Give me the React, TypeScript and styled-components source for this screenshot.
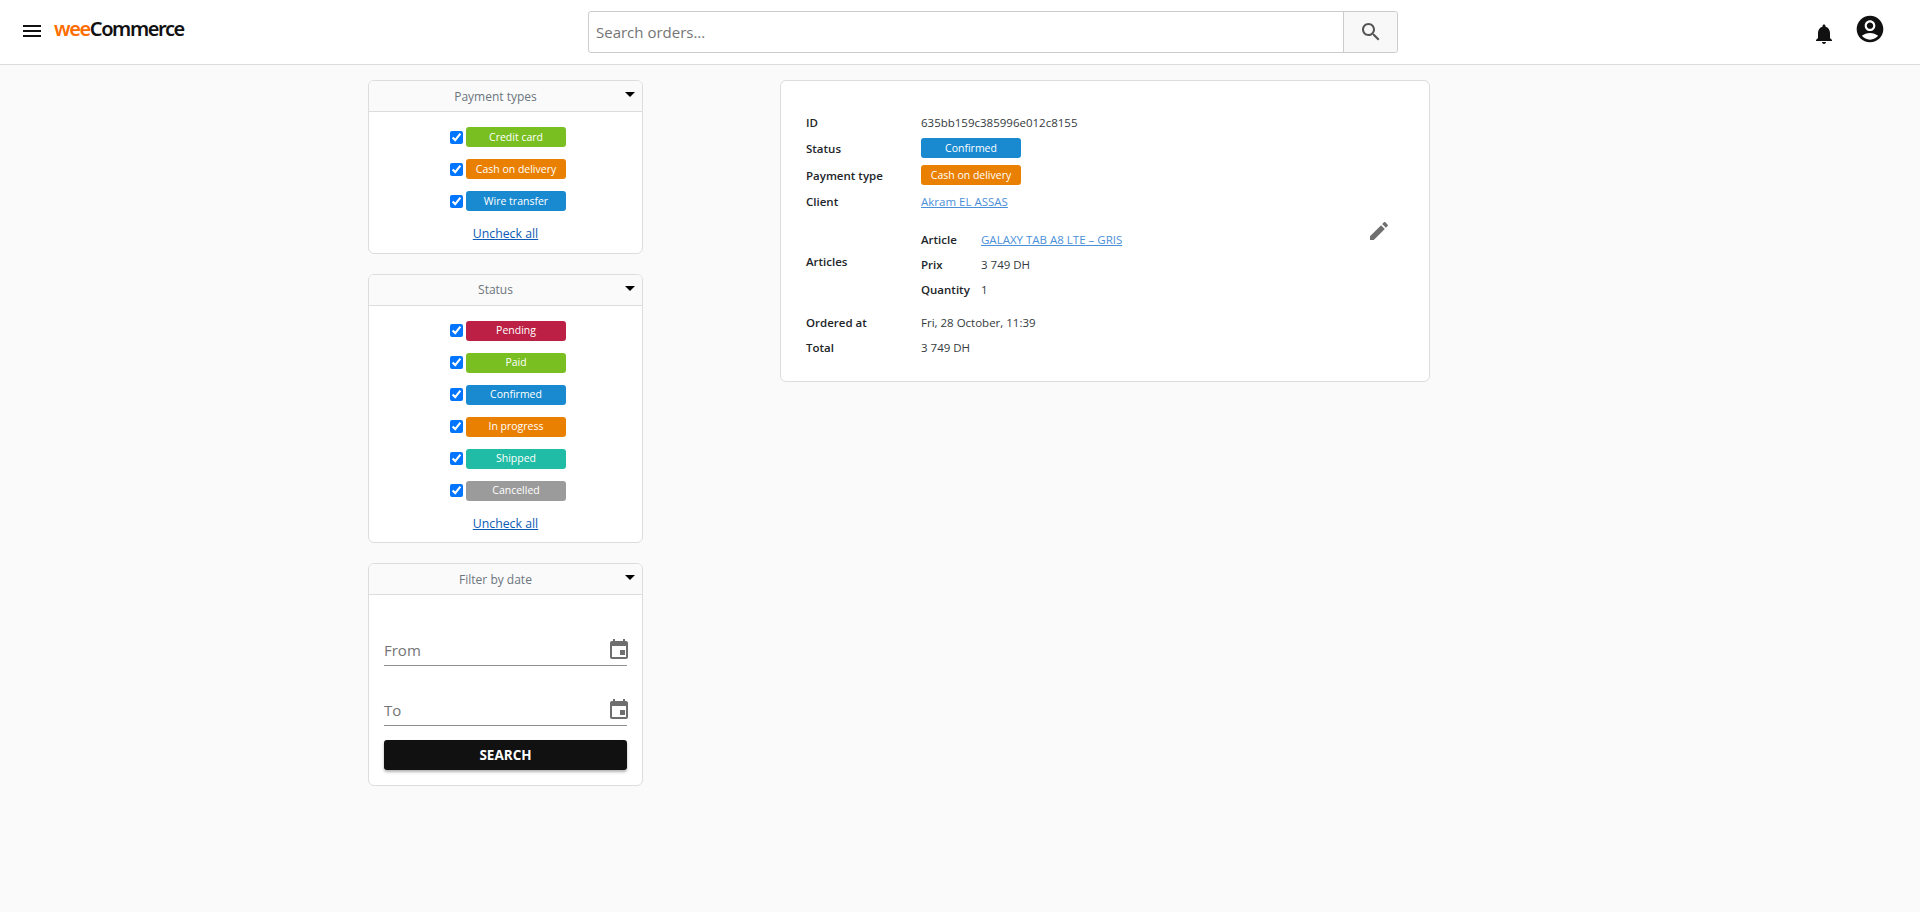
import React from "react";
import styled, { createGlobalStyle } from "styled-components";

const Global = createGlobalStyle`
  html, body { margin: 0; padding: 0; background: #fafafa; }
  body { font-family: "Open Sans", "Noto Sans", sans-serif; color: #212529; }
  * { box-sizing: border-box; }
`;

const Page = styled.div`
  min-height: 912px;
  background: #fafafa;
`;

const Header = styled.header`
  height: 65px;
  background: #fff;
  border-bottom: 1px solid #ddd;
  display: grid;
  grid-template-columns: 588px 810px 1fr;
  align-items: center;
`;

const Brand = styled.div`
  display: flex;
  align-items: center;
  padding-left: 20px;
  gap: 10px;
  margin-top: -3px;
`;

const Logo = styled.div`
  font-family: "Noto Sans", sans-serif;
  font-weight: 600;
  font-size: 20px;
  letter-spacing: -1.4px;
  color: #111;
  line-height: 24px;
  margin-top: -3px;
  span { color: #ff6d00; }
`;

const SearchBox = styled.div`
  display: flex;
  height: 42px;
  border: 1px solid #ccc;
  border-radius: 3px;
  margin-top: -1px;
`;

const SearchInput = styled.input`
  flex: 1;
  border: 0;
  outline: 0;
  padding: 0 7px;
  font: 400 15px "Open Sans", sans-serif;
  background: transparent;
  &::placeholder { color: #757575; opacity: 1; }
`;

const SearchButton = styled.button`
  width: 54px;
  border: 0;
  border-left: 1px solid #ccc;
  background: #f8f8f8;
  border-radius: 0 3px 3px 0;
  display: flex;
  align-items: center;
  justify-content: center;
  padding: 0;
`;

const HeaderIcons = styled.div`
  display: flex;
  align-items: center;
  justify-content: flex-end;
  padding-right: 34px;
  gap: 18px;
  margin-top: -6px;
`;

const BellIcon = styled.svg`
  margin-top: 9px;
`;

const Main = styled.main`
  display: flex;
  align-items: flex-start;
  gap: 137px;
  padding: 15px 0 0 368px;
`;

const FilterColumn = styled.aside`
  width: 275px;
  display: flex;
  flex-direction: column;
  gap: 20px;
`;

const Card = styled.section`
  background: #fff;
  border: 1px solid #ddd;
  border-radius: 6px;
  overflow: hidden;
`;

const CardHeader = styled.div`
  height: 31px;
  background: #fafafa;
  border-bottom: 1px solid #ddd;
  display: flex;
  align-items: center;
  position: relative;
`;

const CardTitle = styled.div`
  flex: 1;
  text-align: center;
  font-size: 12px;
  color: #6c757d;
  padding-right: 20px;
`;

const Caret = styled.span`
  position: absolute;
  right: 7px;
  top: 11px;
  width: 0;
  height: 0;
  border-left: 5px solid transparent;
  border-right: 5px solid transparent;
  border-top: 5px solid #000;
`;

const OptionList = styled.div`
  display: flex;
  flex-direction: column;
  align-items: center;
  gap: 12px;
  padding: 15px 0 0 5px;
`;

const OptionRow = styled.label`
  display: flex;
  align-items: center;
  gap: 3px;
  height: 20px;
`;

const Check = styled.input`
  width: 13px;
  height: 13px;
  margin: 0;
  accent-color: #0075ff;
`;

const Badge = styled.span<{ $color: string }>`
  display: flex;
  align-items: center;
  justify-content: center;
  width: 100px;
  height: 20px;
  border-radius: 3px;
  background: ${(p) => p.$color};
  color: #fff;
  font-size: 10.5px;
  padding-bottom: 1px;
`;

const UncheckLink = styled.a`
  display: block;
  text-align: center;
  font-size: 12.3px;
  color: #0d5bb5;
  text-decoration: underline;
  padding: 14px 0 9.5px;
  line-height: 18px;
`;

const DateBody = styled.div`
  padding: 0 15px 15px;
`;

const DateField = styled.div<{ $first?: boolean }>`
  height: ${(p) => (p.$first ? "71px" : "60px")};
  border-bottom: 1px solid #8f8f8f;
  display: flex;
  align-items: flex-end;
  justify-content: space-between;
  padding-bottom: 3px;
`;

const DateLabel = styled.span`
  font-size: 15px;
  color: #757575;
  line-height: 20px;
  margin-bottom: 2px;
`;

const DateIcon = styled.svg`
  margin: 0 -4px 0 0;
  display: block;
`;

const SearchAction = styled.button`
  display: block;
  width: 100%;
  height: 30px;
  margin-top: 14px;
  background: #111;
  color: #fff;
  border: 0;
  border-radius: 3px;
  font: 700 13.5px "Open Sans", sans-serif;
  box-shadow: 0 2px 3px rgba(0, 0, 0, 0.3);
`;

const DetailCard = styled.section`
  width: 650px;
  height: 302px;
  background: #fff;
  border: 1px solid #ddd;
  border-radius: 6px;
  padding: 28px 25px;
  position: relative;
  font-size: 11.5px;
`;

const InfoRow = styled.div<{ $h: number }>`
  display: grid;
  grid-template-columns: 115px 1fr;
  align-items: center;
  height: ${(p) => p.$h}px;
`;

const Label = styled.div`
  font-weight: 600;
  color: #212529;
`;

const Value = styled.div`
  color: #343a40;
`;

const Link = styled.a`
  color: #4a90d9;
  text-decoration: underline;
`;

const ArticleGrid = styled.div`
  display: grid;
  grid-template-columns: 60px 1fr;
  grid-auto-rows: 25px;
  align-items: center;
  margin-top: 6px;
`;

const EditIcon = styled.svg`
  position: absolute;
  right: 38px;
  top: 138px;
`;

const P = { fill: "currentColor" };

export default function App() {
  const payment = [
    ["Credit card", "#7abf22"],
    ["Cash on delivery", "#ea8001"],
    ["Wire transfer", "#198ad0"],
  ];
  const status = [
    ["Pending", "#bc2045"],
    ["Paid", "#7abf22"],
    ["Confirmed", "#198ad0"],
    ["In progress", "#ea8001"],
    ["Shipped", "#21bca5"],
    ["Cancelled", "#9b9b9b"],
  ];
  const calendar =
    "M19 3h-1V1h-2v2H8V1H6v2H5c-1.11 0-1.99.9-1.99 2L3 19c0 1.1.89 2 2 2h14c1.1 0 2-.9 2-2V5c0-1.1-.9-2-2-2zm0 16H5V8h14v11zM13 12h5v5h-5z";
  return (
    <Page>
      <Global />
      <Header>
        <Brand>
          <svg width="24" height="24" viewBox="0 0 24 24" color="#111">
            <path {...P} d="M3 18h18v-2H3v2zm0-5h18v-2H3v2zm0-7v2h18V6H3z" />
          </svg>
          <Logo>
            <span>wee</span>Commerce
          </Logo>
        </Brand>
        <SearchBox>
          <SearchInput placeholder="Search orders..." />
          <SearchButton aria-label="Search">
            <svg width="24" height="24" viewBox="0 0 24 24" color="#555">
              <path
                {...P}
                d="M15.5 14h-.79l-.28-.27C15.41 12.59 16 11.11 16 9.5 16 5.91 13.09 3 9.5 3S3 5.91 3 9.5 5.91 16 9.5 16c1.61 0 3.09-.59 4.23-1.57l.27.28v.79l5 4.99L20.49 19l-4.99-5zm-6 0C7.01 14 5 11.99 5 9.5S7.01 5 9.5 5 14 7.01 14 9.5 11.99 14 9.5 14z"
              />
            </svg>
          </SearchButton>
        </SearchBox>
        <HeaderIcons>
          <BellIcon width="24" height="24" viewBox="0 0 24 24" color="#111">
            <path
              {...P}
              d="M12 22c1.1 0 2-.9 2-2h-4c0 1.1.9 2 2 2zm6-6v-5c0-3.07-1.63-5.64-4.5-6.32V4c0-.83-.67-1.5-1.5-1.5s-1.5.67-1.5 1.5v.68C7.64 5.36 6 7.92 6 11v5l-2 2v1h16v-1l-2-2z"
            />
          </BellIcon>
          <svg width="32" height="32" viewBox="0 0 24 24" color="#111">
            <path
              {...P}
              fillRule="evenodd"
              d="M12 2C6.48 2 2 6.48 2 12s4.48 10 10 10 10-4.48 10-10S17.52 2 12 2zM5.86 17.12C7.55 15.8 9.68 15 12 15s4.45.8 6.14 2.12C16.67 18.88 14.47 20 12 20s-4.67-1.12-6.14-2.88zM12 5.5c-2.2 0-4 1.8-4 4s1.8 4 4 4 4-1.8 4-4-1.8-4-4-4zm0 1.6c1.33 0 2.4 1.07 2.4 2.4s-1.07 2.4-2.4 2.4-2.4-1.07-2.4-2.4 1.07-2.4 2.4-2.4z"
            />
          </svg>
        </HeaderIcons>
      </Header>
      <Main>
        <FilterColumn>
          <Card>
            <CardHeader>
              <CardTitle>Payment types</CardTitle>
              <Caret />
            </CardHeader>
            <OptionList>
              {payment.map(([t, c]) => (
                <OptionRow key={t}>
                  <Check type="checkbox" defaultChecked />
                  <Badge $color={c}>{t}</Badge>
                </OptionRow>
              ))}
            </OptionList>
            <UncheckLink>Uncheck all</UncheckLink>
          </Card>
          <Card>
            <CardHeader>
              <CardTitle>Status</CardTitle>
              <Caret />
            </CardHeader>
            <OptionList>
              {status.map(([t, c]) => (
                <OptionRow key={t}>
                  <Check type="checkbox" defaultChecked />
                  <Badge $color={c}>{t}</Badge>
                </OptionRow>
              ))}
            </OptionList>
            <UncheckLink>Uncheck all</UncheckLink>
          </Card>
          <Card>
            <CardHeader>
              <CardTitle>Filter by date</CardTitle>
              <Caret />
            </CardHeader>
            <DateBody>
              <DateField $first>
                <DateLabel>From</DateLabel>
                <DateIcon width="24" height="24" viewBox="0 0 24 24" color="#6f6f6f">
                  <path {...P} d={calendar} />
                </DateIcon>
              </DateField>
              <DateField>
                <DateLabel>To</DateLabel>
                <DateIcon width="24" height="24" viewBox="0 0 24 24" color="#6f6f6f">
                  <path {...P} d={calendar} />
                </DateIcon>
              </DateField>
              <SearchAction>SEARCH</SearchAction>
            </DateBody>
          </Card>
        </FilterColumn>
        <DetailCard>
          <InfoRow $h={27}>
            <Label>ID</Label>
            <Value>635bb159c385996e012c8155</Value>
          </InfoRow>
          <InfoRow $h={24}>
            <Label>Status</Label>
            <Badge $color="#198ad0">Confirmed</Badge>
          </InfoRow>
          <InfoRow $h={30}>
            <Label>Payment type</Label>
            <Badge $color="#ea8001">Cash on delivery</Badge>
          </InfoRow>
          <InfoRow $h={23}>
            <Label>Client</Label>
            <Value>
              <Link>Akram EL ASSAS</Link>
            </Value>
          </InfoRow>
          <InfoRow $h={97}>
            <Label>Articles</Label>
            <ArticleGrid>
              <Label>Article</Label>
              <Value>
                <Link>GALAXY TAB A8 LTE – GRIS</Link>
              </Value>
              <Label>Prix</Label>
              <Value>3 749 DH</Value>
              <Label>Quantity</Label>
              <Value>1</Value>
            </ArticleGrid>
          </InfoRow>
          <InfoRow $h={24}>
            <Label>Ordered at</Label>
            <Value>Fri, 28 October, 11:39</Value>
          </InfoRow>
          <InfoRow $h={26}>
            <Label>Total</Label>
            <Value>3 749 DH</Value>
          </InfoRow>
          <EditIcon width="24" height="24" viewBox="0 0 24 24" color="#6f6f6f">
            <path
              {...P}
              d="M3 17.25V21h3.75L17.81 9.94l-3.75-3.75L3 17.25zM20.71 7.04c.39-.39.39-1.02 0-1.41l-2.34-2.34c-.39-.39-1.02-.39-1.41 0l-1.83 1.83 3.75 3.75 1.83-1.83z"
            />
          </EditIcon>
        </DetailCard>
      </Main>
    </Page>
  );
}
